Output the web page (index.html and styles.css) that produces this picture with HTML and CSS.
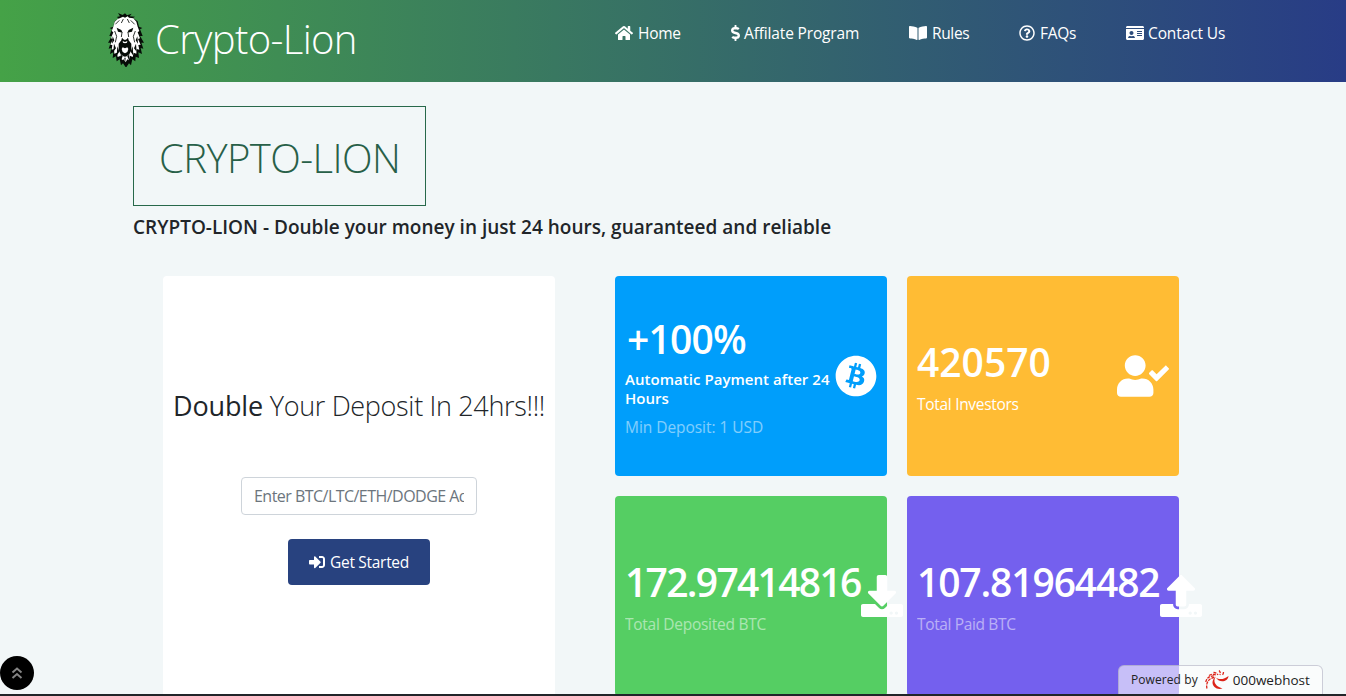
FILE: index.html
```html
<!DOCTYPE html>
<html lang="en">
<head>
<meta charset="utf-8">
<title>Crypto-Lion</title>
<link rel="stylesheet" href="styles.css">
</head>
<body>
<header class="topbar">
  <a class="brand">
    <svg class="lion" viewBox="0 0 114 162">
      <path fill="#060c07" d="M42 10L36 0l14 6 7-5 6 6 14-5-6 8 16 1-6 4 14 10 4 16 10 4-7 4 8 20-8 0 12 20-8 0 6 18-8-2 4 18-11-5 2 17-10-4-1 14-9-6-4 18-6-6-9 13-9-13-6 6-4-18-9 6-2-15-10 5 2-17-10 5 4-18-8 2 6-18-8 0 12-20-8 0 8-20-7-4 11-4 4-16 12-9-6-4z"/>
      <path fill="#fff" d="M41 16l10-5 6 3 8-4 4 4 13 2 9 10 4 15 5 13-5 4 7 18-6 2 8 17-7 1 3 14-8-2-1 14-8-3-3 13-8-4-4 14-4-3-5 9-7-9-4 3-4-14-9 4-2-13-8 3-1-14-7 2 2-14-6-1 8-17-6-2 7-18-5-4 5-13 4-15 9-8z"/>
      <path fill="#060c07" d="M32 44l14 7 4 8-14-3zM82 44l-14 7-4 8 14-3zM48 74l4 5 5 2 5-2 4-5 2 8 8 10 0 20-6 12-8 6-5 1-5-1-8-6-6-12 0-20 8-10z"/>
      <path fill="#fff" d="M47 108l3-5 7 3 7-3 3 5-3 9-7 4-7-4zM50 84l7 3 7-3-1 5-6 2-6-2z"/>
      <path fill="none" stroke="#060c07" stroke-width="2.500" d="M40 22l-12 12M74 22l12 12M52 18l-6 12M64 18l6 12M48 58l-2 14M66 58l2 14M26 54l6 16-4 18M88 54l-6 16 4 18"/>
      <path fill="#060c07" d="M20 70l-2 22 7-10zM94 70l2 22-7-10zM24 92l-2 24 8-10zM90 92l2 24-8-10zM34 100l-2 28 8-12zM80 100l2 28-8-12zM44 124l1 18 5-12zM70 124l-1 18-5-12zM55 134l2 18 2-18z"/>
    </svg>
    <span class="brand-name">Crypto-Lion</span>
  </a>
  <nav class="nav">
    <a><svg class="fa wide" viewBox="0 0 576 512"><path d="M280.37 148.26L96 300.11V464a16 16 0 0 0 16 16l112.06-.29a16 16 0 0 0 15.92-16V368a16 16 0 0 1 16-16h64a16 16 0 0 1 16 16v95.64a16 16 0 0 0 16 16.05L464 480a16 16 0 0 0 16-16V300L295.67 148.26a12.19 12.19 0 0 0-15.3 0zM571.6 251.47L488 182.56V44.05a12 12 0 0 0-12-12h-56a12 12 0 0 0-12 12v72.61L318.47 43a48 48 0 0 0-61 0L4.34 251.47a12 12 0 0 0-1.6 16.9l25.5 31A12 12 0 0 0 45.15 301l235.22-193.74a12.19 12.19 0 0 1 15.3 0L530.9 301a12 12 0 0 0 16.9-1.6l25.5-31a12 12 0 0 0-1.7-16.93z"/></svg><span class="home">Home</span></a>
    <a><svg class="fa thin" viewBox="0 0 288 512"><path d="M209.2 233.4l-108-31.6C88.7 198.2 80 186.5 80 173.5c0-16.3 13.2-29.5 29.5-29.5h66.3c12.2 0 24.2 3.7 34.2 10.5 6.1 4.1 14.3 3.1 19.5-2l34.8-34c7.1-6.9 6.1-18.4-1.8-24.5C238 74.8 207.4 64.1 176 64V16c0-8.8-7.2-16-16-16h-32c-8.8 0-16 7.2-16 16v48h-2.5C45.8 64-5.4 118.7.5 183.6c4.2 46.1 39.4 83.6 83.8 96.6l102.5 30c12.5 3.7 21.2 15.3 21.2 28.3 0 16.3-13.2 29.5-29.5 29.5h-66.3C100 368 88 364.3 78 357.5c-6.1-4.1-14.3-3.1-19.5 2l-34.8 34c-7.1 6.9-6.1 18.4 1.8 24.5 24.5 19.2 55.1 29.9 86.5 30v48c0 8.8 7.2 16 16 16h32c8.8 0 16-7.2 16-16v-48.2c46.6-.9 90.3-28.6 105.7-72.7 21.5-61.6-14.6-124.8-72.5-141.7z"/></svg><span class="affiliate">Affilate Program</span></a>
    <a><svg class="fa wide" viewBox="0 0 576 512"><path d="M542.22 32.05c-54.8 3.11-163.72 14.43-230.96 55.59-4.64 2.84-7.27 7.89-7.27 13.17v363.87c0 11.55 12.63 18.85 23.28 13.49 69.18-34.82 169.23-44.32 218.7-46.92 16.89-.89 30.02-14.43 30.02-30.66V62.75c.01-17.71-15.35-31.74-33.77-30.7zM264.73 87.64C197.5 46.48 88.58 35.17 33.78 32.05 15.36 31.01 0 45.04 0 62.75V400.6c0 16.24 13.13 29.78 30.02 30.66 49.49 2.6 149.59 12.11 218.77 46.95 10.62 5.35 23.21-1.94 23.21-13.46V100.63c0-5.29-2.62-10.14-7.27-12.99z"/></svg><span class="rules">Rules</span></a>
    <a><svg class="fa" viewBox="0 0 512 512"><path d="M256 8C119.043 8 8 119.083 8 256c0 136.997 111.043 248 248 248s248-111.003 248-248C504 119.083 392.957 8 256 8zm0 448c-110.532 0-200-89.431-200-200 0-110.495 89.472-200 200-200 110.491 0 200 89.471 200 200 0 110.53-89.431 200-200 200zm107.244-255.2c0 67.052-72.421 68.084-72.421 92.863V300c0 6.627-5.373 12-12 12h-45.647c-6.627 0-12-5.373-12-12v-8.659c0-35.745 27.1-50.034 47.579-61.516 17.561-9.845 28.324-16.541 28.324-29.579 0-17.246-21.999-28.693-39.784-28.693-23.189 0-33.894 10.977-48.942 29.969-4.057 5.12-11.46 6.071-16.666 2.124l-27.824-21.098c-5.107-3.872-6.251-11.066-2.644-16.363C184.846 131.491 214.94 112 261.794 112c49.071 0 101.45 38.304 101.45 88.8zM298 368c0 23.159-18.841 42-42 42s-42-18.841-42-42 18.841-42 42-42 42 18.841 42 42z"/></svg><span class="faqs">FAQs</span></a>
    <a><svg class="fa wide" viewBox="0 0 576 512"><path d="M528 32H48C21.5 32 0 53.5 0 80v16h576V80c0-26.5-21.5-48-48-48zM0 432c0 26.5 21.5 48 48 48h480c26.5 0 48-21.5 48-48V128H0v304zm352-232c0-4.4 3.6-8 8-8h144c4.4 0 8 3.6 8 8v16c0 4.4-3.6 8-8 8H360c-4.4 0-8-3.6-8-8v-16zm0 64c0-4.4 3.6-8 8-8h144c4.4 0 8 3.6 8 8v16c0 4.4-3.6 8-8 8H360c-4.4 0-8-3.6-8-8v-16zm0 64c0-4.4 3.6-8 8-8h144c4.4 0 8 3.6 8 8v16c0 4.4-3.6 8-8 8H360c-4.4 0-8-3.6-8-8v-16zM176 192c35.3 0 64 28.7 64 64s-28.7 64-64 64-64-28.7-64-64 28.7-64 64-64zM67.1 396.2C75.5 370.5 99.6 352 128 352h8.2c12.3 5.1 25.7 8 39.8 8s27.6-2.9 39.8-8h8.2c28.4 0 52.5 18.5 60.9 44.2 3.2 9.9-5.2 19.8-15.6 19.8H82.7c-10.4 0-18.8-10-15.6-19.8z"/></svg><span class="contact">Contact Us</span></a>
  </nav>
</header>
<main class="page">
  <h1 class="title">CRYPTO-LION</h1>
  <p class="tagline">CRYPTO-LION - Double your money in just 24 hours, guaranteed and reliable</p>
  <div class="content">
    <section class="signup">
      <h2 class="lead"><b>Double</b> <span>Your Deposit In 24hrs!!!</span></h2>
      <input class="field" type="text" placeholder="Enter BTC/LTC/ETH/DODGE Address">
      <a class="button"><svg class="fa" viewBox="0 0 512 512"><path d="M416 448h-84c-6.6 0-12-5.4-12-12v-40c0-6.6 5.4-12 12-12h84c17.7 0 32-14.3 32-32V160c0-17.7-14.3-32-32-32h-84c-6.6 0-12-5.4-12-12V76c0-6.6 5.4-12 12-12h84c53 0 96 43 96 96v192c0 53-43 96-96 96zm-47-201L201 79c-15-15-41-4.5-41 17v96H24c-13.3 0-24 10.7-24 24v96c0 13.3 10.7 24 24 24h136v96c0 21.5 26 32 41 17l168-168c9.3-9.4 9.3-24.6 0-34z"/></svg><span>Get Started</span></a>
    </section>
    <section class="stats">
      <article class="card blue">
        <div class="info">
          <strong class="value rate">+100%</strong>
          <p class="note">Automatic Payment after 24<br>Hours</p>
          <p class="label dim minimum">Min Deposit: 1 USD</p>
        </div>
        <svg class="big" viewBox="0 0 512 512"><path d="M504 256c0 136.967-111.033 248-248 248S8 392.967 8 256 119.033 8 256 8s248 111.033 248 248zm-141.651-35.33c4.937-32.999-20.191-50.739-54.55-62.573l11.146-44.702-27.213-6.781-10.851 43.524c-7.154-1.783-14.502-3.464-21.803-5.13l10.929-43.81-27.198-6.781-11.153 44.686c-5.922-1.349-11.735-2.682-17.377-4.084l.031-.14-37.53-9.37-7.239 29.062s20.191 4.627 19.765 4.913c11.022 2.751 13.014 10.044 12.68 15.825l-12.696 50.925c.76.194 1.744.473 2.829.907-.907-.225-1.876-.473-2.876-.713l-17.796 71.338c-1.349 3.348-4.767 8.37-12.471 6.464.271.395-19.78-4.937-19.78-4.937l-13.51 31.147 35.414 8.827c6.588 1.651 13.045 3.379 19.4 5.006l-11.262 45.213 27.182 6.781 11.153-44.733a1038.209 1038.209 0 0 0 21.687 5.627l-11.115 44.523 27.213 6.781 11.262-45.128c46.404 8.781 81.299 5.239 95.986-36.727 11.834-33.79-.589-53.281-25.004-65.991 17.78-4.098 31.174-15.792 34.747-39.949zm-62.177 87.179c-8.41 33.79-65.308 15.523-83.755 10.943l14.944-59.899c18.446 4.603 77.6 13.717 68.811 48.956zm8.417-87.667c-7.673 30.736-55.031 15.12-70.393 11.292l13.548-54.327c15.363 3.828 64.836 10.973 56.845 43.035z"/></svg>
      </article>
      <article class="card amber">
        <div class="info">
          <strong class="value">420570</strong>
          <p class="label investors">Total Investors</p>
        </div>
        <svg class="big user" viewBox="0 0 640 512"><path d="M224 256c70.7 0 128-57.3 128-128S294.7 0 224 0 96 57.3 96 128s57.3 128 128 128zm89.6 32h-16.7c-22.2 10.2-46.9 16-72.9 16s-50.6-5.8-72.9-16h-16.7C60.2 288 0 348.2 0 422.4V464c0 26.5 21.5 48 48 48h352c26.5 0 48-21.5 48-48v-41.6c0-74.2-60.2-134.4-134.4-134.4zm323-128.4l-27.8-28.1c-4.6-4.7-12.1-4.7-16.8-.1l-104.8 104-45.5-45.8c-4.6-4.7-12.1-4.7-16.8-.1l-28.1 27.9c-4.7 4.6-4.7 12.1-.1 16.8l81.7 82.3c4.6 4.7 12.1 4.7 16.8.1l141.3-140.2c4.6-4.7 4.7-12.2.1-16.8z"/></svg>
      </article>
      <article class="card green">
        <div class="info">
          <strong class="value deposited">172.97414816</strong>
          <p class="label dim total-in">Total Deposited BTC</p>
        </div>
        <svg class="big" viewBox="0 0 512 512"><path d="M216 0h80c13.3 0 24 10.7 24 24v168h87.7c17.8 0 26.7 21.5 14.1 34.1L269.7 378.3c-7.5 7.5-19.8 7.5-27.3 0L90.1 226.1c-12.6-12.6-3.7-34.1 14.1-34.1H192V24c0-13.3 10.7-24 24-24zm296 376v112c0 13.3-10.7 24-24 24H24c-13.3 0-24-10.7-24-24V376c0-13.3 10.7-24 24-24h146.7l49 49c20.1 20.1 52.5 20.1 72.6 0l49-49H488c13.3 0 24 10.7 24 24zm-124 88c0-11-9-20-20-20s-20 9-20 20 9 20 20 20 20-9 20-20zm64 0c0-11-9-20-20-20s-20 9-20 20 9 20 20 20 20-9 20-20z"/></svg>
      </article>
      <article class="card purple">
        <div class="info">
          <strong class="value paid">107.81964482</strong>
          <p class="label dim total-out">Total Paid BTC</p>
        </div>
        <svg class="big" viewBox="0 0 512 512"><path d="M296 384h-80c-13.3 0-24-10.7-24-24V192h-87.7c-17.8 0-26.7-21.5-14.1-34.1L242.3 5.7c7.5-7.5 19.8-7.5 27.3 0l152.2 152.2c12.6 12.6 3.7 34.1-14.1 34.1H320v168c0 13.3-10.7 24-24 24zm216-8v112c0 13.3-10.7 24-24 24H24c-13.3 0-24-10.7-24-24V376c0-13.3 10.7-24 24-24h136v8c0 30.9 25.1 56 56 56h80c30.9 0 56-25.1 56-56v-8h136c13.3 0 24 10.7 24 24zm-124 88c0-11-9-20-20-20s-20 9-20 20 9 20 20 20 20-9 20-20zm64 0c0-11-9-20-20-20s-20 9-20 20 9 20 20 20 20-9 20-20z"/></svg>
      </article>
    </section>
  </div>
</main>
<div class="bottom-edge"></div>
<a class="to-top"><svg viewBox="0 0 12 14"><path d="M1.500 6.500L6 2.500l4.500 4M1.500 12L6 8l4.500 4"/></svg></a>
<a class="host">
  <span class="by">Powered by</span>
  <svg class="swirl" viewBox="0 0 24 20">
    <path d="M23.500 6c-.5 6-9 7.500-12.500 1.800 3 2.200 8.500 1.700 12.500-1.800z"/>
    <path d="M10.800 6.500c-3.200 4.500-.8 10 6.700 12-8 2.500-14-6-6.700-12z"/>
    <path fill="none" stroke="#dc2318" stroke-width="1.300" stroke-dasharray="3 1" d="M2 18.500C.5 13 4 8 9.500 7.500M.8 12c.7-4 4-6.500 8.700-6M4 5.500c2.500-1.500 5-1.500 7-.5M8.500 2.500c2 0 3.500.8 4.500 2.500M14 .5c1.500 1.200 1.500 2.800 1 4.500M18.500 2c0 1.500-.5 2.500-1.500 3.500"/>
  </svg>
  <b class="host-name">000webhost</b>
</a>
</body>
</html>
```
FILE: styles.css
```css
* { box-sizing: border-box; }
body {
  margin: 0;
  height: 696px;
  overflow: hidden;
  position: relative;
  display: flex;
  flex-direction: column;
  background: #f2f7f8;
  color: #212529;
  font: 400 16px/24px "Open Sans", "Noto Sans", sans-serif;
}
h1, h2, p { margin: 0; font-weight: 400; }
svg { display: block; flex: none; fill: currentColor; }

.topbar {
  flex: none;
  height: 82px;
  display: flex;
  align-items: flex-start;
  padding-left: 106px;
  background: linear-gradient(to right, #45a247, #283c86);
  color: #fff;
}
.brand { display: flex; width: 509px; padding-top: 13px; }
.lion { width: 38px; height: 54px; margin-right: 11px; }
.brand-name { font-size: 40px; font-weight: 300; line-height: 52px; letter-spacing: -.64px; white-space: nowrap; }
.nav { display: grid; grid-template-columns: 116px 178px 110px 107px 110px; padding-top: 21px; font-size: 15.5px; }
.nav a { display: flex; align-items: center; gap: 5px; white-space: nowrap; }
.fa { width: 16px; height: 16px; }
.fa.wide { width: 18px; }
.fa.thin { width: 9px; }
.nav .home { letter-spacing: -.3px; }
.nav .affiliate { margin-left: -1px; letter-spacing: -.15px; }
.nav .rules { letter-spacing: -.35px; }
.nav .faqs { letter-spacing: -.3px; }
.nav .contact { margin-left: -1px; letter-spacing: -.12px; }

.page { flex: 1; min-height: 0; padding: 24px 0 0 133px; overflow: hidden; }
.title {
  width: 293px;
  height: 100px;
  padding-left: 25px;
  border: 1px solid #28694b;
  color: #286048;
  font-size: 40px;
  font-weight: 300;
  line-height: 102px;
  letter-spacing: -.56px;
}
.tagline { padding-top: 9px; font-size: 19px; font-weight: 600; line-height: 24px; letter-spacing: .01px; white-space: nowrap; }
.content { display: flex; padding: 37px 0 0 30px; }
.signup {
  width: 392px;
  height: 440px;
  margin-right: 60px;
  padding-top: 111px;
  border-radius: 4px;
  background: #fff;
  display: flex;
  flex-direction: column;
  align-items: center;
}
.lead { font-size: 27px; font-weight: 300; line-height: 38px; letter-spacing: -.33px; white-space: nowrap; }
.lead b { font-weight: 400; letter-spacing: -.15px; }
.field {
  width: 236px;
  height: 38px;
  margin: 52px 0 24px;
  padding: 6px 12px;
  border: 1px solid #ced4da;
  border-radius: 4px;
  background: #fff;
  font: inherit;
  letter-spacing: -.53px;
}
.field::placeholder { color: #6c757d; opacity: 1; }
.button {
  width: 142px;
  height: 46px;
  display: flex;
  align-items: center;
  justify-content: center;
  gap: 5px;
  border-radius: 4px;
  background: #28427f;
  color: #fff;
  font-size: 15.5px;
  letter-spacing: -.3px;
}

.stats { display: grid; grid-template-columns: 272px 272px; grid-auto-rows: 200px; gap: 20px; }
.card { display: flex; align-items: center; justify-content: space-between; padding: 0 10px; border-radius: 4px; color: #fff; }
.card.blue { background: #009efb; }
.card.amber { background: #ffbc34; }
.card.green { background: #55ce63; }
.card.purple { background: #7460ee; }
.info { white-space: nowrap; }
.value { display: block; padding-top: 2px; font-size: 39px; font-weight: 600; line-height: 48px; margin-bottom: 6px; }
.rate { padding-left: 2px; letter-spacing: -.78px; }
.deposited { width: 236px; letter-spacing: -1.7px; }
.paid { width: 243px; letter-spacing: -1.12px; }
.note { padding-top: 1px; font-size: 15px; font-weight: 600; line-height: 19px; margin-bottom: 7px; letter-spacing: .04px; }
.label { font-size: 15.5px; line-height: 24px; }
.minimum { letter-spacing: -.05px; }
.investors { letter-spacing: -.3px; }
.total-in { letter-spacing: -.27px; }
.total-out { letter-spacing: -.36px; }
.dim { opacity: .5; }
.big { width: 42px; height: 42px; }
.big.user { width: 52px; }

.bottom-edge { position: absolute; left: 0; right: 0; bottom: 0; height: 2px; background: #212529; }
.to-top {
  position: absolute;
  left: 0;
  top: 656px;
  width: 34px;
  height: 34px;
  display: flex;
  align-items: center;
  justify-content: center;
  border-radius: 50%;
  background: #000;
}
.to-top svg { width: 12px; height: 14px; fill: none; stroke: #858585; stroke-width: 2; }
.host {
  position: absolute;
  left: 1118px;
  top: 665px;
  width: 205px;
  height: 29px;
  display: flex;
  align-items: center;
  padding-left: 12px;
  border: 1px solid rgba(150, 150, 170, .45);
  border-bottom: 0;
  border-radius: 6px 6px 0 0;
  background: rgba(255, 255, 255, .6);
  color: #222;
  font-size: 12px;
  white-space: nowrap;
}
.by { letter-spacing: .08px; }
.swirl { width: 24px; height: 20px; margin: 0 4px 0 7px; fill: #dc2318; }
.host-name { font: 500 13.5px/24px "Open Sans", sans-serif; }
```
